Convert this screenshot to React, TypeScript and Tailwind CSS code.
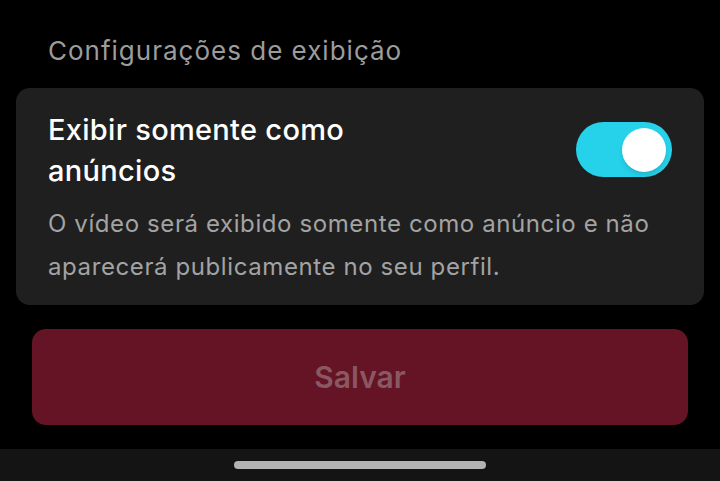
export default function App() {
  return (
    <div
      className="w-[720px] h-[481px] bg-black flex flex-col overflow-hidden"
      style={{ fontFamily: "Inter, Roboto, sans-serif" }}
    >
      <div className="flex-1 flex flex-col">
        <div className="pt-[33px] px-[48px] h-[88px]">
          <h2 className="text-[26px] leading-[36px] tracking-[1px] text-[#9c9c9c] font-normal">
            Configurações de exibição
          </h2>
        </div>

        <div className="mx-4 rounded-[14px] bg-[#1f1f1f] pt-[21px] pb-[17px] pl-[32px] pr-[32px]">
          <div className="flex items-start justify-between">
            <p className="text-[29px] leading-[41px] tracking-[0.3px] text-white font-medium w-[340px]">
              Exibir somente como anúncios
            </p>
            <button className="mt-[13px] w-[96px] h-[55px] rounded-full bg-[#26d1ea] flex items-center justify-end pr-[6px]">
              <span className="w-[44px] h-[44px] rounded-full bg-white shadow-md" />
            </button>
          </div>
          <p className="mt-[11px] text-[24px] leading-[43px] tracking-[0.6px] text-[#a3a3a3]">
            O vídeo será exibido somente como anúncio e não aparecerá publicamente no seu perfil.
          </p>
        </div>

        <div className="px-8 mt-[24px]">
          <button className="w-full h-[96px] rounded-[14px] bg-[#641424] text-[30px] font-semibold text-[#8a5862]">
            Salvar
          </button>
        </div>
      </div>

      <div className="h-[32px] bg-[#141414] flex items-center justify-center">
        <div className="w-[252px] h-[8px] rounded-full bg-[#b3b3b3]" />
      </div>
    </div>
  );
}
